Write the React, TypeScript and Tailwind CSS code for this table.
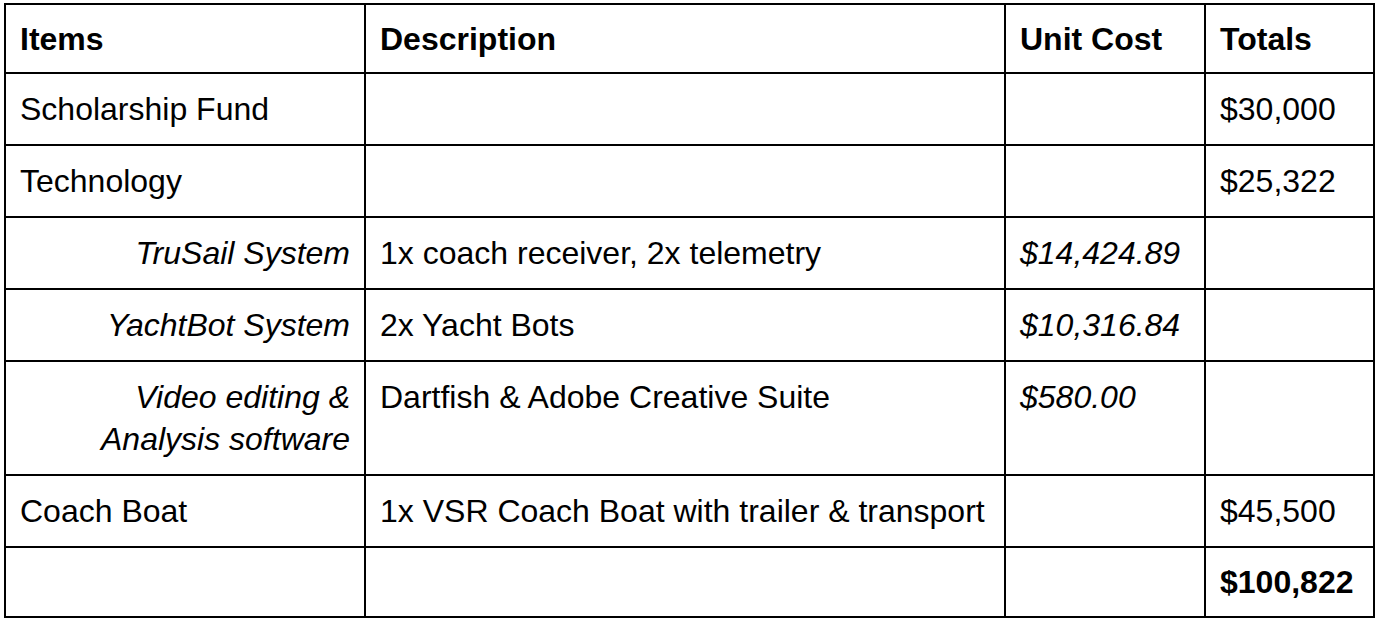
const rows = [
  { item: "Scholarship Fund", desc: "", unit: "", total: "$30,000" },
  { item: "Technology", desc: "", unit: "", total: "$25,322" },
  { item: "TruSail System", desc: "1x coach receiver, 2x telemetry", unit: "$14,424.89", total: "", sub: true },
  { item: "YachtBot System", desc: "2x Yacht Bots", unit: "$10,316.84", total: "", sub: true },
  { item: "Video editing & Analysis software", desc: "Dartfish & Adobe Creative Suite", unit: "$580.00", total: "", sub: true, tall: true },
  { item: "Coach Boat", desc: "1x VSR Coach Boat with trailer & transport", unit: "", total: "$45,500" },
];

const cell = "border-2 border-black px-[14px] align-top";

const App = () => {
  return (
    <div className="min-h-screen bg-white pl-[4px] pt-[3px] font-['Liberation_Sans',Arial,sans-serif] text-[32px] leading-[42px] text-black">
      <table className="w-[1369px] table-fixed border-collapse">
        <colgroup>
          <col className="w-[360px]" />
          <col className="w-[640px]" />
          <col className="w-[200px]" />
          <col className="w-[169px]" />
        </colgroup>
        <thead>
          <tr className="font-bold">
            <th className={`${cell} text-left pt-[13px] pb-[12px]`}>Items</th>
            <th className={`${cell} text-left pt-[13px] pb-[12px]`}>Description</th>
            <th className={`${cell} text-left pt-[13px] pb-[12px]`}>Unit Cost</th>
            <th className={`${cell} text-left pt-[13px] pb-[12px]`}>Totals</th>
          </tr>
        </thead>
        <tbody>
          {rows.map((r) => {
            const pad = r.tall ? "pt-[14px] pb-[14px]" : "pt-[14px] pb-[14px]";
            return (
              <tr key={r.item}>
                <td className={`${cell} ${pad} ${r.sub ? "text-right italic" : "text-left"}`}>
                  {r.tall ? (
                    <>
                      Video editing &amp;
                      <br />
                      Analysis software
                    </>
                  ) : (
                    r.item
                  )}
                </td>
                <td className={`${cell} ${pad}`}>{r.desc}</td>
                <td className={`${cell} ${pad} italic`}>{r.unit}</td>
                <td className={`${cell} ${pad}`}>{r.total}</td>
              </tr>
            );
          })}
          <tr>
            <td className={`${cell} pt-[13px] pb-[13px]`}>&nbsp;</td>
            <td className={`${cell} pt-[13px] pb-[13px]`}></td>
            <td className={`${cell} pt-[13px] pb-[13px]`}></td>
            <td className={`${cell} pt-[13px] pb-[13px] font-bold`}>$100,822</td>
          </tr>
        </tbody>
      </table>
    </div>
  );
};

export default App;
